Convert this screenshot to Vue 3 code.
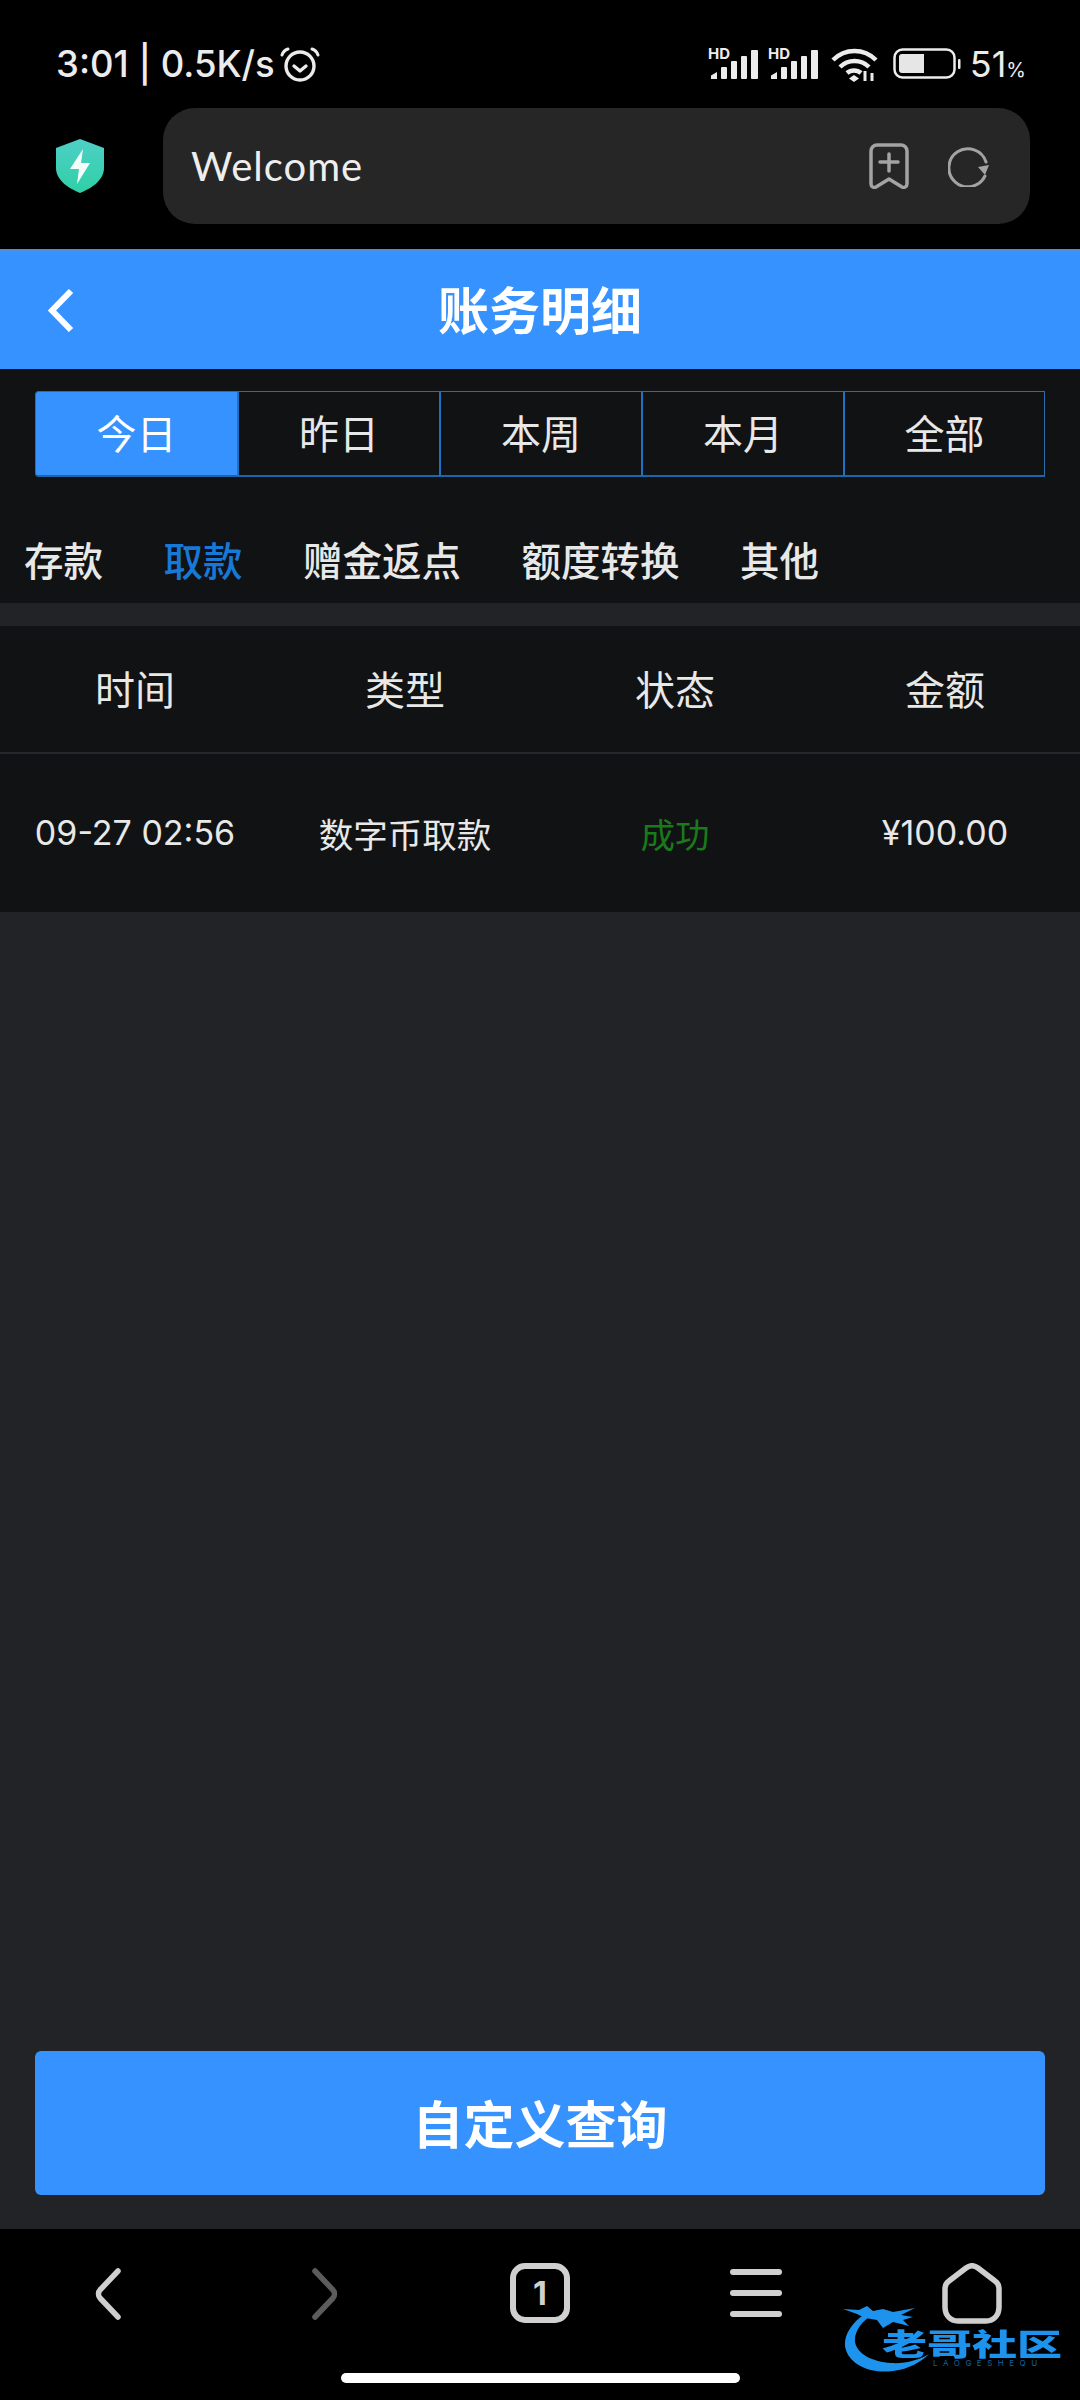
<template>
  <div class="phone">
    <header class="chrome">
      <div class="status">
        <div class="status-left">
          <span>3:01 | 0.5K/s</span>
          <svg class="alarm" width="40" height="36" viewBox="0 0 40 36" fill="none" stroke="#ececec" stroke-linecap="round">
            <circle cx="20" cy="20" r="14" stroke-width="3.4" />
            <path d="M14 20l6 5 6-5" stroke-width="3.4" stroke-linejoin="round" />
            <path d="M2 9c1-3 3-5 6-6M38 9c-1-3-3-5-6-6" stroke-width="3" />
          </svg>
        </div>
        <div class="status-right">
          <div class="signals">
            <svg v-for="n in 2" :key="n" class="signal" width="50" height="46" viewBox="0 -12 50 46">
              <text x="0" y="12" class="hd">HD</text>
              <g fill="#ececec">
                <path d="M3 32v-3.500l6-3.500v7z" />
                <rect x="13" y="20" width="6" height="12" rx="1" />
                <rect x="23" y="14" width="6" height="18" rx="1" />
                <rect x="33" y="9" width="6" height="23" rx="1" />
                <rect x="43" y="3" width="7" height="29" rx="1" />
              </g>
            </svg>
          </div>
          <svg class="wifi" width="47" height="36" viewBox="0 0 47 36" fill="none" stroke="#ececec" stroke-width="4.500">
            <path d="M2 14c12-12 31-12 43 0" />
            <path d="M9 21c8-8 21-8 29 0" />
            <path d="M16 27c4-3.500 10-3.500 14 0" />
            <path d="M23 29l5 3.500-5 3.500-5-3.500z" fill="#ececec" stroke="none" />
            <path d="M34 25v10M41 27v8" stroke-width="3" />
          </svg>
          <svg class="battery" width="68" height="32" viewBox="0 0 68 32">
            <rect x="1.500" y="1.500" width="60" height="28" rx="8" fill="none" stroke="#ececec" stroke-width="2.500" />
            <path d="M6 9a3 3 0 0 1 3-3h22v19H9a3 3 0 0 1-3-3z" fill="#e6e6e6" />
            <rect x="65" y="11" width="2.500" height="10" rx="1" fill="#ececec" />
          </svg>
          <span class="percent">51<small>%</small></span>
        </div>
      </div>
      <div class="url-row">
        <svg class="shield" width="48" height="54" viewBox="0 0 48 54">
          <defs>
            <linearGradient id="shieldFill" x1="0" y1="0" x2="0" y2="1">
              <stop offset="0" stop-color="#4ecfc6" />
              <stop offset="1" stop-color="#2fd0a6" />
            </linearGradient>
          </defs>
          <path d="M24 0l24 9v20c0 12-12 20-24 25C12 49 0 41 0 29V9z" fill="url(#shieldFill)" />
          <path d="M27 10L14 30h9l-2 15 13-21h-9z" fill="#f4fffb" />
        </svg>
        <div class="url-bar">
          <span class="url-text">Welcome</span>
          <div class="url-actions">
            <svg width="40" height="46" viewBox="0 0 40 46" fill="none" stroke="#a3a3a3" stroke-width="3.500" stroke-linejoin="round" stroke-linecap="round">
              <path d="M8 2h24a6 6 0 0 1 6 6v33c0 3-3 4-5 3l-13-8-13 8c-2 1-5 0-5-3V8a6 6 0 0 1 6-6z" />
              <path d="M20 11v17M11 19h18" />
            </svg>
            <svg width="42" height="42" viewBox="0 0 42 42" fill="none">
              <path d="M38 17A19 19 0 1 0 37 31" stroke="#a3a3a3" stroke-width="3" stroke-linecap="round" />
              <path d="M41 20l-4 10-7-8z" fill="#a3a3a3" />
            </svg>
          </div>
        </div>
      </div>
    </header>

    <div class="nav-bar">
      <svg class="back" width="27" height="43" viewBox="0 0 27 43" fill="none" stroke="#fff" stroke-width="6">
        <path d="M24 2L5 21.500 24 41" />
      </svg>
      <h1>账务明细</h1>
    </div>

    <main class="content">
      <div class="panel-top">
        <div class="segments">
          <button v-for="item in ranges" :key="item" :class="['segment', { active: activeRange === item }]" @click="activeRange = item">
            {{ item }}
          </button>
        </div>
        <div class="tabs">
          <span v-for="tab in tabs" :key="tab" :class="['tab', { active: activeTab === tab }]" @click="activeTab = tab">{{ tab }}</span>
        </div>
      </div>

      <div class="table">
        <div class="row head">
          <span v-for="col in columns" :key="col">{{ col }}</span>
        </div>
        <div v-for="rec in records" :key="rec.time" class="row body">
          <span class="num">{{ rec.time }}</span>
          <span>{{ rec.type }}</span>
          <span class="ok">{{ rec.status }}</span>
          <span class="num">{{ rec.amount }}</span>
        </div>
      </div>

      <button class="query-btn">自定义查询</button>
    </main>

    <footer class="toolbar">
      <div class="tools">
        <svg class="chev" width="27" height="52" viewBox="0 0 27 52" fill="none" stroke="#cfcfcf" stroke-width="5.500" stroke-linecap="round" stroke-linejoin="round">
          <path d="M23 3L5 22c-2 2-2 6 0 8l18 19" />
        </svg>
        <svg class="chev" width="27" height="52" viewBox="0 0 27 52" fill="none" stroke="#5c5c5c" stroke-width="5.500" stroke-linecap="round" stroke-linejoin="round">
          <path d="M4 3l18 19c2 2 2 6 0 8L4 49" />
        </svg>
        <div class="tab-count">1</div>
        <div class="burger"><i></i><i></i><i></i></div>
        <svg width="60" height="61" viewBox="0 0 60 61" fill="none" stroke="#cfcfcf" stroke-width="5.500" stroke-linejoin="round">
          <path d="M24 5L7 18c-3 2-4 4-4 8v18c0 8 5 14 13 14h28c8 0 13-6 13-14V26c0-4-1-6-4-8L36 5c-4-3-8-3-12 0z" />
        </svg>
      </div>
      <div class="home-bar"></div>

      <div class="watermark">
        <svg class="dragon" width="90" height="76" viewBox="0 0 90 76" fill="#1d93ee">
          <path d="M22 14C6 24-1 40 3 50c5 16 27 24 47 21 16-2 28-9 36-17-10 6-24 10-38 9-18-1-34-9-36-21-1-10 6-20 18-28z" />
          <path d="M0 9l16 1 8-4 6 5 10-2 10 3 22-4-14 7 12 2-10 3 6 6-16-4-10 6-6-8-12-2-8-4z" />
        </svg>
        <div class="mark-text">
          <span class="mark-cn">老哥社区</span>
          <span class="mark-en">LAOGESHEQU</span>
        </div>
      </div>
    </footer>
  </div>
</template>

<script setup>
import { ref } from 'vue'

const ranges = ['今日', '昨日', '本周', '本月', '全部']
const tabs = ['存款', '取款', '赠金返点', '额度转换', '其他']
const columns = ['时间', '类型', '状态', '金额']
const records = [
  { time: '09-27 02:56', type: '数字币取款', status: '成功', amount: '¥100.00' },
]

const activeRange = ref('今日')
const activeTab = ref('取款')
</script>

<style scoped>
.phone {
  position: relative;
  width: 1080px;
  height: 2400px;
  display: flex;
  flex-direction: column;
  overflow: hidden;
  background: #212327;
  color: #e8e8e8;
  font-family: "Noto Sans CJK SC", "Noto Sans", sans-serif;
}

.chrome {
  background: #000;
}

.status {
  height: 108px;
  padding: 20px 54px 0 56px;
  box-sizing: border-box;
  display: flex;
  align-items: center;
  justify-content: space-between;
  font-family: Inter, sans-serif;
  font-size: 36.5px;
  font-weight: 500;
  color: #ececec;
}

.status-left {
  display: flex;
  align-items: center;
  gap: 5px;
}

.status-right {
  display: flex;
  align-items: center;
}

.signals {
  display: flex;
  gap: 10px;
}

.signal {
  margin-top: -12px;
}

.hd {
  font-family: Inter, sans-serif;
  font-size: 15px;
  font-weight: 700;
  fill: #ececec;
}

.wifi {
  margin-left: 13px;
}

.battery {
  margin-left: 15px;
}

.percent {
  margin-left: 9px;
  font-size: 36px;
  font-weight: 400;
}

.percent small {
  font-size: 20px;
}

.url-row {
  height: 141px;
  padding: 0 50px 25px 56px;
  box-sizing: border-box;
  display: flex;
  align-items: center;
  gap: 59px;
}

.url-bar {
  flex: 1;
  height: 116px;
  padding: 0 40px 0 28px;
  box-sizing: border-box;
  display: flex;
  align-items: center;
  justify-content: space-between;
  background: #262626;
  border-radius: 32px;
}

.url-text {
  font-family: Lato, sans-serif;
  font-size: 40px;
  letter-spacing: 1px;
  color: #eee;
}

.url-actions {
  display: flex;
  align-items: center;
  gap: 39px;
}

.nav-bar {
  position: relative;
  height: 120px;
  padding-bottom: 5px;
  box-sizing: border-box;
  border-top: 3px solid #4f8edb;
  background: #3592ff;
  display: flex;
  align-items: center;
  justify-content: center;
}

.nav-bar h1 {
  margin: 0;
  font-size: 51px;
  font-weight: 700;
  color: #fff;
}

.back {
  position: absolute;
  left: 47px;
  top: 37px;
}

.panel-top {
  background: #111213;
}

.segments {
  margin: 0 35px;
  padding-top: 22px;
  display: grid;
  grid-template-columns: repeat(5, 1fr);
}

.segment {
  height: 86px;
  padding: 0 0 3px;
  background: transparent;
  border-style: solid;
  border-width: 1px 0 2px 2px;
  border-color: #2b6cad #2b6cad #1c64ab #1f70c0;
  color: #e8e8e8;
  font-family: inherit;
  font-size: 40px;
}

.segment:first-child {
  border-left: 1px solid #2b6cad;
  border-radius: 4px 0 0 4px;
}

.segment:last-child {
  border-right-width: 1px;
}

.segment.active {
  background: #3592ff;
  color: #fff;
}

.tabs {
  display: flex;
  gap: 60.5px;
  padding: 51px 0 13px 24px;
  font-size: 39.5px;
  font-weight: 500;
  line-height: 62px;
}

.tab.active {
  color: #1878d8;
}

.table {
  margin-top: 23px;
  background: #111213;
}

.row {
  display: grid;
  grid-template-columns: repeat(4, 1fr);
  align-items: center;
  text-align: center;
}

.row.head {
  height: 128px;
  padding-bottom: 2px;
  font-size: 40px;
  border-bottom: 2px solid #25272b;
  box-sizing: border-box;
}

.row.body {
  height: 158px;
  padding-bottom: 1px;
  box-sizing: border-box;
  font-size: 34.5px;
}

.row.body .num {
  font-family: Inter, sans-serif;
  font-size: 34px;
}

.ok {
  color: #1a7a1a;
}

.content {
  flex: 1;
  display: flex;
  flex-direction: column;
}

.query-btn {
  margin: auto 35px 34px;
  height: 144px;
  padding: 0 0 3px;
  background: #3592ff;
  border: 0;
  border-radius: 6px;
  color: #fff;
  font-family: inherit;
  font-size: 51px;
  font-weight: 700;
}

.toolbar {
  position: relative;
  height: 171px;
  background: #000;
}

.tools {
  height: 144px;
  padding-top: 34px;
  box-sizing: border-box;
  display: grid;
  grid-template-columns: repeat(5, 1fr);
  justify-items: center;
  align-items: start;
}

.chev {
  margin-top: 5px;
}

.tab-count {
  width: 60px;
  height: 60px;
  box-sizing: border-box;
  border: 6px solid #d0d0d0;
  border-radius: 15px;
  display: flex;
  align-items: center;
  justify-content: center;
  font-family: Inter, sans-serif;
  font-size: 32px;
  font-weight: 700;
  color: #d0d0d0;
}

.burger {
  width: 52px;
  padding-top: 6px;
  display: flex;
  flex-direction: column;
  gap: 15px;
}

.burger i {
  display: block;
  height: 6px;
  border-radius: 3px;
  background: #d0d0d0;
}

.home-bar {
  width: 399px;
  height: 10px;
  margin: 0 auto;
  border-radius: 5px;
  background: #fff;
}

.watermark {
  position: absolute;
  left: 843px;
  top: 71px;
  width: 225px;
  height: 76px;
}

.dragon {
  position: absolute;
  left: 0;
  top: 0;
  filter: blur(0.6px);
}

.mark-text {
  position: absolute;
  left: 39px;
  top: 27px;
  display: flex;
  flex-direction: column;
  color: #1d93ee;
}

.mark-cn {
  font-size: 30px;
  font-weight: 900;
  line-height: 30px;
  white-space: nowrap;
  transform: scaleX(1.5);
  transform-origin: left center;
}

.mark-en {
  margin: 1px 0 0 51px;
  font-family: Inter, sans-serif;
  font-size: 8px;
  line-height: 10px;
  letter-spacing: 5.500px;
  color: #15609f;
  white-space: nowrap;
}
</style>

<style>
body {
  background: #000;
}
</style>
